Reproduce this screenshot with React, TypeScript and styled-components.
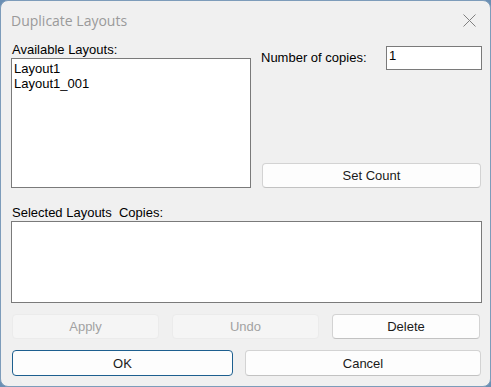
import React from "react";
import styled, { createGlobalStyle } from "styled-components";

const Global = createGlobalStyle`
  html, body { margin: 0; padding: 0; background: #6a8fb4; }
  body { width: 491px; height: 387px; overflow: hidden; }
  * { box-sizing: border-box; }
`;

const Window = styled.div`
  width: 491px;
  height: 387px;
  background: #f0f0f0;
  border: 1px solid #7d9cba;
  border-radius: 8px;
  display: flex;
  flex-direction: column;
  font-family: "Liberation Sans", Arial, sans-serif;
  font-size: 13px;
  color: #000;
  overflow: hidden;
`;

const TitleBar = styled.div`
  height: 41px;
  display: flex;
  align-items: center;
  justify-content: space-between;
  padding: 0 14px 2px 10px;
`;

const Title = styled.div`
  font-family: "Open Sans", "Noto Sans", sans-serif;
  font-size: 14px;
  color: #9a9a9a;
`;

const CloseIcon = () => (
  <svg width="13" height="13" viewBox="0 0 13 13">
    <path d="M0.5 0.5 L12.5 12.5 M12.5 0.5 L0.5 12.5" stroke="#808080" strokeWidth="1" fill="none" />
  </svg>
);

const Content = styled.div`
  padding: 0 8px 0 10px;
  display: flex;
  flex-direction: column;
`;

const TopGrid = styled.div`
  display: grid;
  grid-template-columns: 240px 1fr;
  column-gap: 10px;
`;

const Column = styled.div`
  display: flex;
  flex-direction: column;
`;

const RightColumn = styled.div`
  display: flex;
  flex-direction: column;
  justify-content: space-between;
`;

const Label = styled.div<{ $top?: number }>`
  line-height: 16px;
  height: 16px;
  padding-left: 1px;
  margin-top: ${(p) => p.$top ?? 0}px;
  white-space: pre;
`;

const ListBox = styled.div<{ $height: number }>`
  height: ${(p) => p.$height}px;
  background: #fff;
  border: 1px solid #7a7a7a;
  padding: 2px 2px;
`;

const ListItem = styled.div`
  line-height: 15px;
`;

const CopiesRow = styled.div`
  margin-top: 4px;
  display: flex;
  align-items: center;
  justify-content: space-between;
`;

const CopiesLabel = styled.span`
  line-height: 16px;
`;

const Input = styled.div`
  width: 96px;
  height: 24px;
  background: #fff;
  border: 1px solid #7a7a7a;
  padding: 1px 2px;
  line-height: 16px;
`;

const Button = styled.div<{ $width?: number; $height?: number; $disabled?: boolean; $default?: boolean }>`
  ${(p) => (p.$width ? `width: ${p.$width}px;` : "")}
  height: ${(p) => p.$height ?? 25}px;
  display: flex;
  align-items: center;
  justify-content: center;
  border-radius: 4px;
  background: ${(p) => (p.$disabled ? "#f5f5f5" : "#fdfdfd")};
  border: 1px solid ${(p) => (p.$default ? "#1d5f8f" : p.$disabled ? "#ebebeb" : "#d3d3d3")};
  ${(p) => (!p.$disabled && !p.$default ? "border-bottom-color: #c2c2c2;" : "")}
  color: ${(p) => (p.$disabled ? "#a2a2a2" : "#1a1a1a")};
`;

const SetCountWrap = styled.div`
  padding: 0 1px;
`;

const ButtonRow = styled.div<{ $top: number; $gap: number }>`
  display: flex;
  gap: ${(p) => p.$gap}px;
  margin-top: ${(p) => p.$top}px;
  padding-left: 1px;
`;

export default function App() {
  return (
    <>
      <Global />
      <Window>
        <TitleBar>
          <Title>Duplicate Layouts</Title>
          <CloseIcon />
        </TitleBar>
        <Content>
          <TopGrid>
            <Column>
              <Label>Available Layouts:</Label>
              <ListBox $height={130}>
                <ListItem>Layout1</ListItem>
                <ListItem>Layout1_001</ListItem>
              </ListBox>
            </Column>
            <RightColumn>
              <CopiesRow>
                <CopiesLabel>Number of copies:</CopiesLabel>
                <Input>1</Input>
              </CopiesRow>
              <SetCountWrap>
                <Button $height={25}>Set Count</Button>
              </SetCountWrap>
            </RightColumn>
          </TopGrid>
          <Label $top={17}>Selected Layouts  Copies:</Label>
          <ListBox $height={82} />
          <ButtonRow $top={11} $gap={13}>
            <Button $width={147} $disabled>Apply</Button>
            <Button $width={147} $disabled>Undo</Button>
            <Button $width={148}>Delete</Button>
          </ButtonRow>
          <ButtonRow $top={11} $gap={12}>
            <Button $width={221} $height={26} $default>OK</Button>
            <Button $width={236} $height={26}>Cancel</Button>
          </ButtonRow>
        </Content>
      </Window>
    </>
  );
}
